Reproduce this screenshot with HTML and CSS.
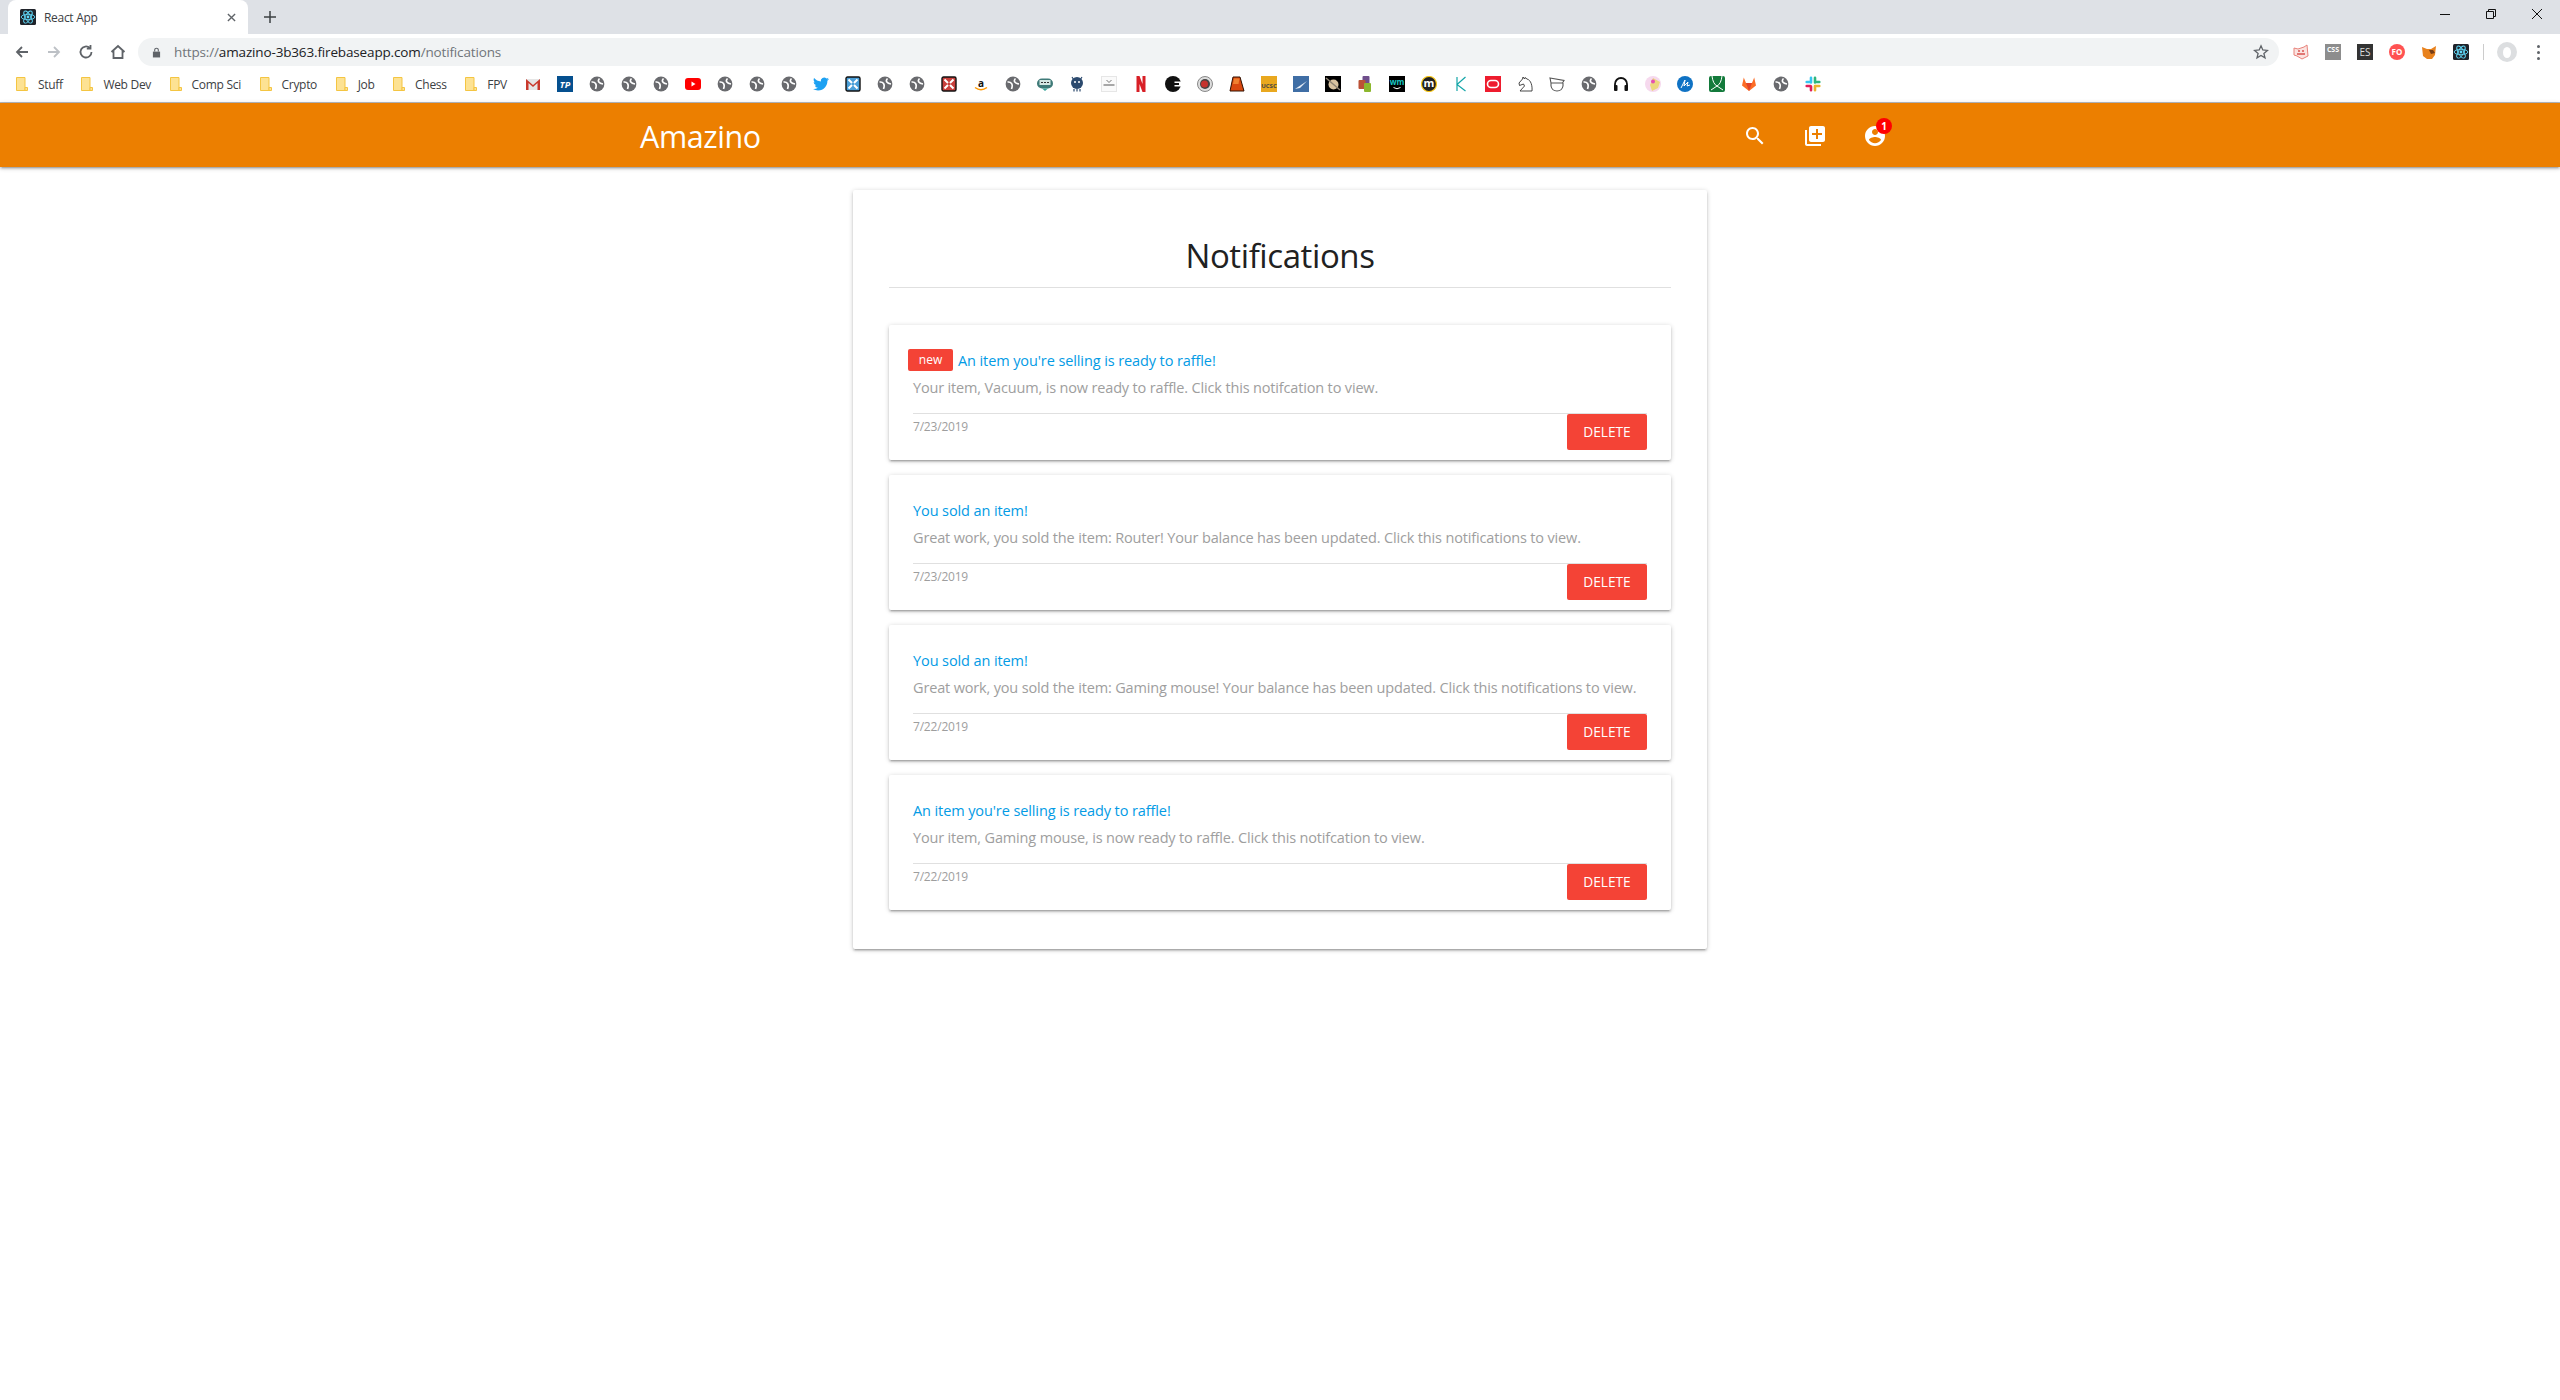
FILE: index.html
```html
<!DOCTYPE html>
<html lang="en">

<head>
	<meta charset="utf-8">
	<title>React App</title>
	<link rel="stylesheet" href="styles.css">
</head>

<body>
	<svg class="sprites" xmlns="http://www.w3.org/2000/svg">
		<symbol id="globe" viewBox="0 0 16 16"><circle cx="8" cy="8" r="7.4" fill="#696a6e"/><path d="M2.500 6C6 5.500 8.500 8 6.500 13M10.500 2.500C8 5 10 7.500 14 8" fill="none" stroke="#fff" stroke-width="1.600"/></symbol>
		<symbol id="react" viewBox="0 0 16 16"><rect width="16" height="16" rx="1.500" fill="#20232a"/><g fill="none" stroke="#61dafb" stroke-width=".9"><ellipse cx="8" cy="8" rx="6.800" ry="2.700"/><ellipse cx="8" cy="8" rx="6.800" ry="2.700" transform="rotate(60 8 8)"/><ellipse cx="8" cy="8" rx="6.800" ry="2.700" transform="rotate(120 8 8)"/></g><circle cx="8" cy="8" r="1.400" fill="#61dafb"/></symbol>
		<symbol id="folder" viewBox="0 0 16 16"><path d="M2.500 1.500h8.500v13H2.500z" fill="#fde293" stroke="#f4c542"/><path d="M11 11.500h2.500v3H11z" fill="#fde293" stroke="#f4c542"/></symbol>
		<symbol id="crossbox" viewBox="0 0 16 16"><rect x="1" y="1" width="14" height="14" rx="1.500" fill="currentColor" stroke="#111" stroke-width="1.400"/><path d="M3.500 3.500 7 7M12.500 3.500 9 7M3.500 12.500 7 9M12.500 12.500 9 9" stroke="#fff" stroke-width="2"/></symbol>
	</svg>

	<div class="chrome">
		<div class="tabstrip">
			<div class="tab">
				<svg class="ico16"><use href="#react"/></svg>
				<span class="tab-title">React App</span>
				<svg class="tab-x" viewBox="0 0 10 10"><path d="M1 1 9 9M9 1 1 9"/></svg>
			</div>
			<svg class="tab-new" viewBox="0 0 12 12"><path d="M6 0V12M0 6H12"/></svg>
			<div class="winctl">
				<svg viewBox="0 0 12 12"><path d="M1 6.500H11"/></svg>
				<svg viewBox="0 0 12 12"><path d="M1.500 3.500H8.500V10.500H1.500ZM3.500 3.500V1.500H10.500V8.500H8.500"/></svg>
				<svg viewBox="0 0 12 12"><path d="M1 1 11 11M11 1 1 11"/></svg>
			</div>
		</div>

		<div class="toolbar">
			<svg class="nav-ico" viewBox="0 0 16 16"><path d="M14 8H3M8 3 3 8 8 13"/></svg>
			<svg class="nav-ico off" viewBox="0 0 16 16"><path d="M2 8H13M8 3 13 8 8 13"/></svg>
			<svg class="nav-ico" viewBox="0 0 16 16"><path d="M13.500 8A5.500 5.500 0 1 1 11.800 4M12.500 1V4.700H8.800"/></svg>
			<svg class="nav-ico" viewBox="0 0 16 16"><path d="M1.500 8 8 2 14.500 8M3.500 7V14H12.500V7"/></svg>
			<div class="omnibox">
				<svg class="lock" viewBox="0 0 10 12"><path d="M1 5H9V11.500H1Z" fill="#5f6368"/><path d="M3 5V3.200A2 2 0 0 1 7 3.200V5" fill="none" stroke="#5f6368" stroke-width="1.200"/></svg>
				<span class="url"><span class="url-dim">https://</span>amazino-3b363.firebaseapp.com<span class="url-dim">/notifications</span></span>
				<svg class="star" viewBox="0 0 16 16"><path d="M8 1.800 9.800 6 14.400 6.400 10.900 9.400 12 13.900 8 11.500 4 13.900 5.100 9.400 1.600 6.400 6.200 6Z"/></svg>
			</div>
			<div class="extensions">
				<svg class="ico16" viewBox="0 0 16 16"><path d="M1 4 5 5 11 3 14 1 15 12 9 15 4 12 1 11Z" fill="#fbe3e0" stroke="#e8837b"/><circle cx="6" cy="7" r="1" fill="#d9534f"/><circle cx="10" cy="7" r="1" fill="#d9534f"/><path d="M4 10H12" stroke="#d9534f" stroke-width="1.500"/></svg>
				<span class="ext-css">CSS</span>
				<span class="ext-es">ES</span>
				<span class="ext-fo">FO</span>
				<svg class="ico16" viewBox="0 0 16 16"><path d="M1 3 6 5H10L15 2 14 11 11 15H6L2 12Z" fill="#e8821e"/><path d="M8 6H12L14 9 10 10Z" fill="#763d16"/></svg>
				<svg class="ico16"><use href="#react"/></svg>
				<i class="ext-sep"></i>
				<span class="avatar"><i></i></span>
				<span class="kebab"><i></i><i></i><i></i></span>
			</div>
		</div>

		<div class="bookmarks">
			<span class="bm-folder"><svg class="ico16"><use href="#folder"/></svg>Stuff</span>
			<span class="bm-folder"><svg class="ico16"><use href="#folder"/></svg>Web Dev</span>
			<span class="bm-folder"><svg class="ico16"><use href="#folder"/></svg>Comp Sci</span>
			<span class="bm-folder"><svg class="ico16"><use href="#folder"/></svg>Crypto</span>
			<span class="bm-folder"><svg class="ico16"><use href="#folder"/></svg>Job</span>
			<span class="bm-folder"><svg class="ico16"><use href="#folder"/></svg>Chess</span>
			<span class="bm-folder"><svg class="ico16"><use href="#folder"/></svg>FPV</span>
			<div class="bm-icons">
				<svg class="ico16" viewBox="0 0 16 16"><path d="M1 3H15V14H1Z" fill="#e6e6e6"/><path d="M1 14V3L8 9 15 3V14H12.500V7L8 11 3.500 7V14Z" fill="#c9392c"/></svg>
				<svg class="ico16" viewBox="0 0 16 16"><rect width="16" height="16" fill="#05508f"/><text x="8" y="11.500" class="svg-tp">TP</text></svg>
				<svg class="ico16"><use href="#globe"/></svg>
				<svg class="ico16"><use href="#globe"/></svg>
				<svg class="ico16"><use href="#globe"/></svg>
				<svg class="ico16" viewBox="0 0 16 16"><rect y="2" width="16" height="12" rx="3" fill="#f00"/><path d="M6.500 5.500 10.500 8 6.500 10.500Z" fill="#fff"/></svg>
				<svg class="ico16"><use href="#globe"/></svg>
				<svg class="ico16"><use href="#globe"/></svg>
				<svg class="ico16"><use href="#globe"/></svg>
				<svg class="ico16" viewBox="0 0 24 24"><path fill="#1da1f2" d="M23.953 4.57a10 10 0 01-2.825.775 4.958 4.958 0 002.163-2.723c-.951.555-2.005.959-3.127 1.184a4.92 4.92 0 00-8.384 4.482C7.69 8.095 4.067 6.13 1.64 3.162a4.822 4.822 0 00-.666 2.475c0 1.71.87 3.213 2.188 4.096a4.904 4.904 0 01-2.228-.616v.06a4.923 4.923 0 003.946 4.827 4.996 4.996 0 01-2.212.085 4.936 4.936 0 004.604 3.417 9.867 9.867 0 01-6.102 2.105c-.39 0-.779-.023-1.17-.067a13.995 13.995 0 007.557 2.209c9.053 0 13.998-7.496 13.998-13.985 0-.21 0-.42-.015-.63A9.935 9.935 0 0024 4.59z"/></svg>
				<svg class="ico16 tint-blue"><use href="#crossbox"/></svg>
				<svg class="ico16"><use href="#globe"/></svg>
				<svg class="ico16"><use href="#globe"/></svg>
				<svg class="ico16 tint-red"><use href="#crossbox"/></svg>
				<svg class="ico16" viewBox="0 0 16 16"><text x="8" y="10.700" class="svg-amazon">a</text><path d="M2 11.500Q8 16 14 11.500" fill="none" stroke="#f90" stroke-width="1.500"/></svg>
				<svg class="ico16"><use href="#globe"/></svg>
				<svg class="ico16" viewBox="0 0 16 16"><rect y="2.500" width="16" height="10" rx="5" fill="#3f7a78"/><rect x="2.500" y="4" width="11" height="5" fill="#d5e8e4"/><path d="M4 6.500H6M7 6.500H9M10 6.500H12" stroke="#333"/><path d="M5 12.500H11L8 15Z" fill="#3aa59a"/></svg>
				<svg class="ico16" viewBox="0 0 16 16"><circle cx="8" cy="7" r="6" fill="#2c4a6e"/><path d="M3 1 5 4M13 1 11 4M5 13V15.500M8 13V15.500M11 13V15.500" stroke="#2c4a6e" stroke-width="1.200"/><circle cx="6" cy="6" r="1" fill="#fff"/><circle cx="10" cy="6" r="1" fill="#fff"/></svg>
				<svg class="ico16" viewBox="0 0 16 16"><rect x=".5" y=".5" width="15" height="15" fill="#fafafa" stroke="#e6e6e6"/><path d="M5.500 4 8 6.500 10.500 4" fill="none" stroke="#777"/><path d="M2.500 9H13.500" stroke="#555"/></svg>
				<svg class="ico16" viewBox="0 0 16 16"><path d="M3.500 0H6.500L9.500 8V0H12.500V16H9.500L6.500 8V16H3.500Z" fill="#d81f26"/></svg>
				<svg class="ico16" viewBox="0 0 16 16"><circle cx="8" cy="8" r="8" fill="#111"/><path d="M16 5.500H9.500V7H14V9H9.500V10.500H16Z" fill="#fff"/></svg>
				<svg class="ico16" viewBox="0 0 16 16"><circle cx="8" cy="8" r="7.500" fill="#ddd" stroke="#888"/><circle cx="8" cy="8" r="5" fill="#444"/><circle cx="7.500" cy="8" r="3.500" fill="#c5322d"/></svg>
				<svg class="ico16" viewBox="0 0 16 16"><path d="M4 1H11L15 15H1Z" fill="#d9480f" stroke="#301000"/><path d="M5 2.500H10.500L9.500 8H4Z" fill="#f08030"/></svg>
				<svg class="ico16" viewBox="0 0 16 16"><rect width="16" height="16" fill="#e9a81f"/><text x="8" y="11.500" class="svg-ucsc">UCSC</text></svg>
				<svg class="ico16" viewBox="0 0 16 16"><rect width="16" height="16" fill="#3f6ea5"/><path d="M2 13 14 5 7 12Z" fill="#e8eef6"/></svg>
				<svg class="ico16" viewBox="0 0 16 16"><rect width="16" height="16" fill="#000"/><circle cx="8.500" cy="8.500" r="5" fill="#d9c3a0"/><path d="M1 2 15 14" stroke="#8f8474" stroke-width="1.500"/></svg>
				<svg class="ico16" viewBox="0 0 16 16"><rect x="5.500" y="0" width="7" height="9" rx="1" fill="#6f4e8c"/><rect x="1.500" y="4" width="7" height="9" rx="1" fill="#bc5236"/><rect x="7" y="7" width="7" height="9" rx="1" fill="#8cb72e"/></svg>
				<svg class="ico16" viewBox="0 0 16 16"><rect width="16" height="16" fill="#000"/><text x="8" y="9" class="svg-wm">wm</text><path d="M4.500 11.500Q8 14 11.500 11.500" fill="none" stroke="#fff"/></svg>
				<svg class="ico16" viewBox="0 0 16 16"><circle cx="8" cy="8" r="7.500" fill="#222" stroke="#f5c518" stroke-width="1.200"/><text x="8" y="11" class="svg-m">m</text></svg>
				<svg class="ico16" viewBox="0 0 16 16"><path d="M4 1V15M12.500 1 4 8.500 12.500 15" fill="none" stroke="#14a6a8" stroke-width="1.200"/></svg>
				<svg class="ico16" viewBox="0 0 16 16"><rect width="16" height="16" fill="#ee1c2e"/><rect x="2.500" y="4.500" width="11" height="7" rx="3.500" fill="none" stroke="#fff" stroke-width="1.600"/></svg>
				<svg class="ico16" viewBox="0 0 16 16"><path d="M6 1 5.500 3 2 7 2.500 9.500 6.500 8 7.500 10 3 15H15C15.500 10 14 4 10 3L8 1.500 7.500 3Z" fill="#fff" stroke="#333" stroke-width=".9"/></svg>
				<svg class="ico16" viewBox="0 0 16 16"><path d="M1 2 15 4.500 13.500 7H2ZM2 7V10Q3 15 8 15 13 15 14 10V7" fill="#fff" stroke="#555" stroke-width="1.100"/></svg>
				<svg class="ico16"><use href="#globe"/></svg>
				<svg class="ico16" viewBox="0 0 16 16"><path d="M2 11V8A6 6 0 0 1 14 8V11" fill="none" stroke="#111" stroke-width="1.800"/><rect x="1" y="9" width="3.500" height="6" rx="1" fill="#111"/><rect x="11.500" y="9" width="3.500" height="6" rx="1" fill="#111"/></svg>
				<svg class="ico16" viewBox="0 0 16 16"><circle cx="8" cy="8" r="8" fill="#f6d9ee"/><path d="M8 2 15 6 13 12 7 15 5 9Z" fill="#ecd77f"/><circle cx="8" cy="5.500" r="2" fill="#e64fb0"/></svg>
				<svg class="ico16" viewBox="0 0 16 16"><circle cx="8" cy="8" r="8" fill="#0f72c4"/><path d="M4 12 8 4 7 10 11 6 10 10 13 9" fill="none" stroke="#fff"/></svg>
				<svg class="ico16" viewBox="0 0 16 16"><rect width="16" height="16" rx="2" fill="#137a3b"/><path d="M3 0Q4 8 8 10 12 8 13 0M2 14 8 10 14 14" fill="none" stroke="#fff"/></svg>
				<svg class="ico16" viewBox="0 0 16 16"><path d="M8 15 1 9.500 2.800 1.500 5 7H11L13.200 1.500 15 9.500Z" fill="#fc6d26"/><path d="M8 15 5 7H11Z" fill="#e24329"/></svg>
				<svg class="ico16"><use href="#globe"/></svg>
				<svg class="ico16" viewBox="0 0 16 16"><g fill="none" stroke-width="2.600" stroke-linecap="round"><path d="M6 1.700V6.500M1.700 6H5.500" stroke="#36c5f0"/><path d="M10 1.700V6.500M14.300 6H11" stroke="#2eb67d"/><path d="M10 14.300V10M14.300 10H10.500" stroke="#ecb22e"/><path d="M6 14.300V10.500M1.700 10H5.500" stroke="#e01e5a"/></g></svg>
			</div>
		</div>
	</div>

	<nav class="navbar">
		<div class="navbar-inner">
			<span class="brand">Amazino</span>
			<div class="nav-actions">
				<span class="nav-btn"><svg viewBox="0 0 24 24"><path d="M15.500 14h-.79l-.28-.27C15.410 12.590 16 11.110 16 9.500 16 5.910 13.090 3 9.500 3S3 5.910 3 9.500 5.910 16 9.500 16c1.610 0 3.090-.59 4.230-1.570l.27.28v.79l5 4.990L20.490 19l-4.990-5zm-6 0C7.010 14 5 11.990 5 9.500S7.010 5 9.500 5 14 7.010 14 9.500 11.990 14 9.500 14z"/></svg></span>
				<span class="nav-btn"><svg viewBox="0 0 24 24"><path d="M4 6H2v14c0 1.100.9 2 2 2h14v-2H4V6zm16-4H8c-1.100 0-2 .9-2 2v12c0 1.100.9 2 2 2h12c1.100 0 2-.9 2-2V4c0-1.100-.9-2-2-2zm-1 9h-4v4h-2v-4H9V9h4V5h2v4h4v2z"/></svg></span>
				<span class="nav-btn"><svg viewBox="0 0 24 24"><path d="M12 2C6.480 2 2 6.480 2 12s4.480 10 10 10 10-4.480 10-10S17.520 2 12 2zm0 3c1.660 0 3 1.340 3 3s-1.340 3-3 3-3-1.340-3-3 1.340-3 3-3zm0 14.200c-2.500 0-4.710-1.280-6-3.220.03-1.990 4-3.080 6-3.080 1.990 0 5.970 1.090 6 3.080-1.290 1.940-3.500 3.220-6 3.220z"/></svg><b class="nav-badge">1</b></span>
			</div>
		</div>
	</nav>

	<main class="panel">
		<h1>Notifications</h1>

		<div class="notif">
			<div class="notif-title"><span class="new-badge">new</span>An item you're selling is ready to raffle!</div>
			<p class="notif-msg">Your item, Vacuum, is now ready to raffle. Click this notifcation to view.</p>
			<div class="notif-foot">
				<span class="notif-date">7/23/2019</span>
				<button class="btn-delete">Delete</button>
			</div>
		</div>

		<div class="notif">
			<div class="notif-title">You sold an item!</div>
			<p class="notif-msg">Great work, you sold the item: Router! Your balance has been updated. Click this notifications to view.</p>
			<div class="notif-foot">
				<span class="notif-date">7/23/2019</span>
				<button class="btn-delete">Delete</button>
			</div>
		</div>

		<div class="notif">
			<div class="notif-title">You sold an item!</div>
			<p class="notif-msg">Great work, you sold the item: Gaming mouse! Your balance has been updated. Click this notifications to view.</p>
			<div class="notif-foot">
				<span class="notif-date">7/22/2019</span>
				<button class="btn-delete">Delete</button>
			</div>
		</div>

		<div class="notif">
			<div class="notif-title">An item you're selling is ready to raffle!</div>
			<p class="notif-msg">Your item, Gaming mouse, is now ready to raffle. Click this notifcation to view.</p>
			<div class="notif-foot">
				<span class="notif-date">7/22/2019</span>
				<button class="btn-delete">Delete</button>
			</div>
		</div>
	</main>
</body>
</html>
```

FILE: styles.css
```css
:root {
	--orange: #ec7f00;
	--red: #f44336;
	--link: #039be5;
	--muted: #9e9e9e;
	--line: #e0e0e0;
	--strip: #dee1e6;
	--ui-grey: #5f6368;
}

* {
	box-sizing: border-box;
}

body {
	margin: 0;
	height: 1400px;
	overflow: hidden;
	background-color: #fff;
	font-family: "Open Sans", "Noto Sans", sans-serif;
	color: #212121;
}

.sprites {
	display: none;
}

.ico16 {
	width: 16px;
	height: 16px;
	flex: none;
	display: block;
}

.tint-blue {
	color: #4a9fd8;
}

.tint-red {
	color: #c9403c;
}

/* browser chrome */
.tabstrip {
	height: 34px;
	display: flex;
	align-items: flex-end;
	padding-left: 8px;
	background-color: var(--strip);
}

.tab {
	width: 240px;
	height: 34px;
	display: flex;
	align-items: center;
	padding: 0 12px;
	background-color: #fff;
	border-radius: 8px 8px 0 0;
}

.tab-title {
	flex: 1;
	margin-left: 8px;
	font-size: 12px;
	letter-spacing: -.3px;
	color: #3c4043;
}

.tab-x {
	width: 9px;
	height: 9px;
	fill: none;
	stroke: #5f6368;
	stroke-width: 1.5;
}

.tab-new {
	width: 12px;
	height: 12px;
	margin: 0 0 11px 16px;
	fill: none;
	stroke: #3c4043;
	stroke-width: 1.5;
}

.winctl {
	display: flex;
	gap: 34px;
	margin: 0 17px 14px auto;
}

.winctl svg {
	width: 12px;
	height: 12px;
	fill: none;
	stroke: #111;
	stroke-width: 1;
}

.toolbar {
	height: 36px;
	display: flex;
	align-items: center;
	padding-left: 14px;
}

.nav-ico {
	width: 16px;
	height: 16px;
	margin-right: 16px;
	fill: none;
	stroke: var(--ui-grey);
	stroke-width: 1.8;
}

.nav-ico.off {
	stroke: #bdc1c6;
}

.omnibox {
	width: 2141px;
	height: 28px;
	margin-left: -4px;
	display: flex;
	align-items: center;
	padding: 0 10px 0 14px;
	background-color: #f1f3f4;
	border-radius: 14px;
}

.lock {
	width: 9px;
	height: 11px;
}

.url {
	flex: 1;
	margin-left: 13px;
	font-size: 13.5px;
	letter-spacing: -.15px;
	color: #202124;
}

.url-dim {
	color: #70757a;
}

.star {
	width: 16px;
	height: 16px;
	fill: none;
	stroke: var(--ui-grey);
	stroke-width: 1.3;
}

.extensions {
	display: flex;
	align-items: center;
	gap: 16px;
	margin-left: 14px;
}

.ext-css {
	width: 16px;
	height: 16px;
	background-color: #8d8d8d;
	color: #fff;
	font-size: 7px;
	font-weight: 700;
	line-height: 11px;
	text-align: center;
}

.ext-es {
	width: 16px;
	height: 16px;
	background-color: #333;
	color: #ddd;
	font-size: 10px;
	line-height: 16px;
	text-align: center;
}

.ext-fo {
	width: 16px;
	height: 16px;
	border-radius: 50%;
	background-color: #ff5252;
	color: #fff;
	font-size: 8px;
	font-weight: 700;
	line-height: 16px;
	text-align: center;
}

.ext-sep {
	width: 1px;
	height: 16px;
	margin: 0 -3px 0 -2px;
	background-color: #ccc;
}

.avatar {
	width: 20px;
	height: 20px;
	margin-right: 1px;
	display: flex;
	justify-content: center;
	align-items: center;
	border-radius: 50%;
	background-color: #dcdee0;
}

.avatar i {
	width: 8px;
	height: 11px;
	border-radius: 50%;
	background-color: #fff;
}

.kebab {
	display: flex;
	flex-direction: column;
	gap: 3px;
	margin-left: 3px;
}

.kebab i {
	width: 3px;
	height: 3px;
	border-radius: 50%;
	background-color: var(--ui-grey);
}

.bookmarks {
	height: 33px;
	display: flex;
	align-items: center;
	padding: 0 0 4px 14px;
	border-bottom: 1px solid #b8babe;
	font-size: 12px;
	letter-spacing: -.3px;
	color: #3c4043;
}

.bm-folder {
	display: flex;
	align-items: center;
	gap: 8px;
	margin-right: 16.6px;
}

.bm-icons {
	display: flex;
	gap: 16px;
	margin-left: 1px;
	letter-spacing: 0;
}

.svg-tp {
	font-size: 9px;
	font-weight: 700;
	font-style: italic;
	fill: #fff;
	text-anchor: middle;
}

.svg-amazon {
	font-size: 10px;
	font-weight: 700;
	fill: #111;
	text-anchor: middle;
}

.svg-ucsc {
	font-size: 6px;
	font-weight: 700;
	fill: #444;
	text-anchor: middle;
}

.svg-wm {
	font-size: 8px;
	font-weight: 700;
	fill: #19c5c5;
	text-anchor: middle;
}

.svg-m {
	font-size: 11px;
	font-weight: 700;
	fill: #fff;
	text-anchor: middle;
}

/* app */
.navbar {
	height: 64px;
	background-color: var(--orange);
	box-shadow: 0 2px 2px 0 rgba(0, 0, 0, 0.14), 0 3px 1px -2px rgba(0, 0, 0, 0.12), 0 1px 5px 0 rgba(0, 0, 0, 0.2);
}

.navbar-inner {
	width: 1280px;
	height: 64px;
	margin: 0 auto;
	display: flex;
	align-items: center;
	justify-content: space-between;
	padding-right: 15px;
}

.brand {
	padding-top: 1px;
	font-size: 30.5px;
	letter-spacing: -.4px;
	color: #fff;
}

.nav-actions {
	display: flex;
	gap: 0;
}

.nav-btn {
	position: relative;
	width: 60px;
	height: 64px;
	padding-top: 1px;
	display: flex;
	align-items: center;
	justify-content: center;
}

.nav-btn svg {
	width: 24px;
	height: 24px;
	fill: #fff;
}

.nav-badge {
	position: absolute;
	top: 15px;
	left: 31px;
	width: 16px;
	height: 16px;
	border-radius: 50%;
	background-color: #f00;
	color: #fff;
	font-size: 10px;
	line-height: 16px;
	text-align: center;
}

.panel {
	width: 854px;
	height: 759px;
	margin: 23px auto 0;
	padding: 0 36px;
	background-color: #fff;
	border-radius: 2px;
	box-shadow: 0 2px 2px 0 rgba(0, 0, 0, 0.14), 0 3px 1px -2px rgba(0, 0, 0, 0.12), 0 1px 5px 0 rgba(0, 0, 0, 0.2);
}

h1 {
	height: 98px;
	margin: 0 0 37px;
	padding-top: 44px;
	border-bottom: 1px solid var(--line);
	font-size: 33px;
	font-weight: 400;
	line-height: 44px;
	letter-spacing: -.4px;
	text-align: center;
}

.notif {
	height: 135px;
	margin-bottom: 15px;
	padding: 24px 24px 0;
	border-radius: 2px;
	box-shadow: 0 2px 2px 0 rgba(0, 0, 0, 0.14), 0 3px 1px -2px rgba(0, 0, 0, 0.12), 0 1px 5px 0 rgba(0, 0, 0, 0.2);
}

.notif-title {
	height: 22px;
	display: flex;
	align-items: center;
	font-size: 14.5px;
	letter-spacing: -.1px;
	color: var(--link);
}

.new-badge {
	width: 45px;
	height: 22px;
	margin: 0 5px 0 -5px;
	border-radius: 2px;
	background-color: var(--red);
	color: #fff;
	font-size: 12px;
	line-height: 22px;
	letter-spacing: 0;
	text-align: center;
}

.notif-msg {
	height: 22px;
	margin: 6px 0 14px;
	font-size: 14.5px;
	line-height: 22px;
	letter-spacing: -.16px;
	color: var(--muted);
}

.notif-foot {
	display: flex;
	justify-content: space-between;
	align-items: flex-start;
	border-top: 1px solid var(--line);
}

.notif-date {
	margin-top: 4px;
	font-size: 12px;
	line-height: 18px;
	letter-spacing: -.2px;
	color: var(--muted);
}

.btn-delete {
	width: 80px;
	height: 36px;
	padding: 0 0 1px;
	border: 0;
	border-radius: 2px;
	background-color: var(--red);
	color: #fff;
	font-family: inherit;
	font-size: 13.7px;
	letter-spacing: 0;
	text-transform: uppercase;
}
```
